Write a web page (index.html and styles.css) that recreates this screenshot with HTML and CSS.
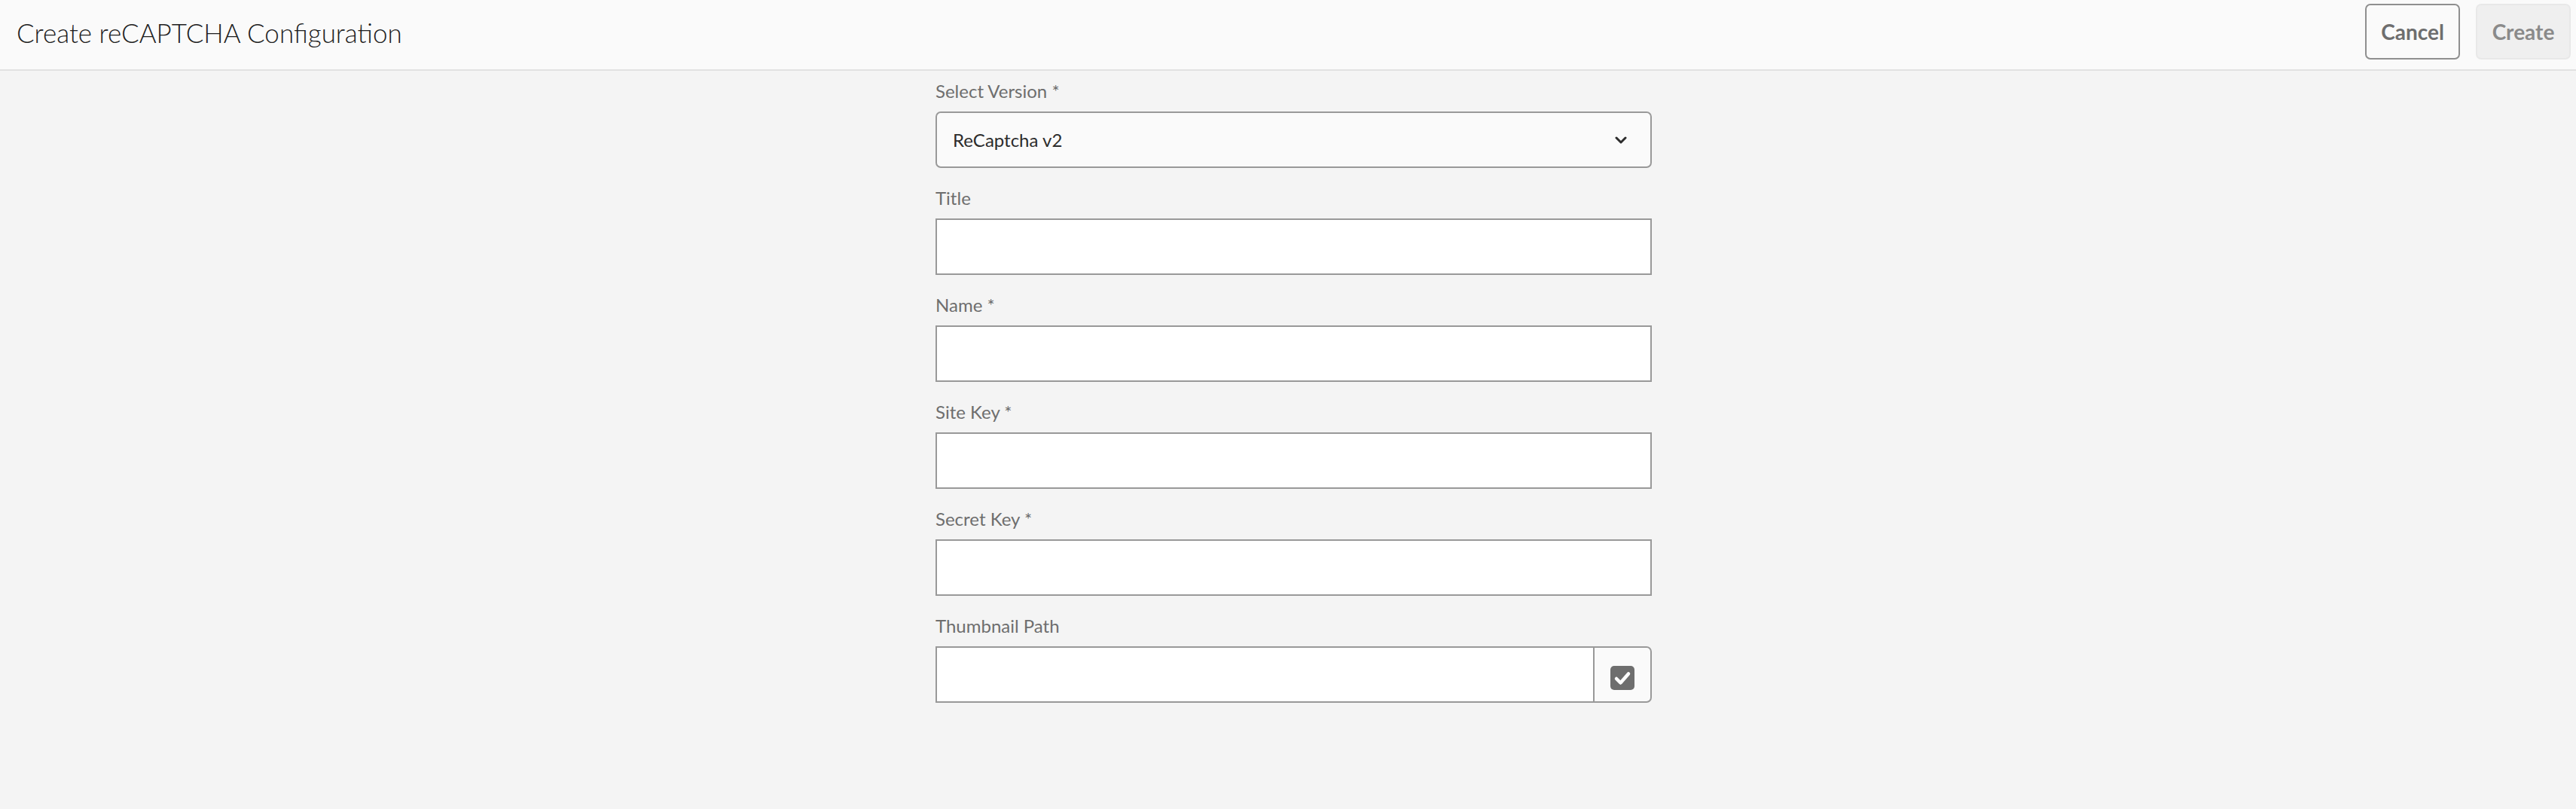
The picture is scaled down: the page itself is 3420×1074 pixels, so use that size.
FILE: index.html
```html
<!DOCTYPE html>
<html lang="en">
<head>
<meta charset="utf-8">
<title>Create reCAPTCHA Configuration</title>
<link rel="stylesheet" href="styles.css">
</head>
<body>
<header class="topbar">
  <h1 class="page-title">Create reCAPTCHA Configuration</h1>
  <div class="actions">
    <button class="btn btn-secondary" type="button">Cancel</button>
    <button class="btn btn-primary" type="button" disabled>Create</button>
  </div>
</header>
<main class="content">
  <form class="form">
    <div class="field">
      <label class="label">Select Version *</label>
      <div class="select">
        <span class="select-value">ReCaptcha v2</span>
        <svg class="chevron" width="16" height="10" viewBox="0 0 16 10"><path d="M2 2 L8 8 L14 2" fill="none" stroke="#2c2c2c" stroke-width="3" stroke-linecap="round" stroke-linejoin="round"/></svg>
      </div>
    </div>
    <div class="field">
      <label class="label">Title</label>
      <input class="input" type="text">
    </div>
    <div class="field">
      <label class="label">Name *</label>
      <input class="input" type="text">
    </div>
    <div class="field">
      <label class="label">Site Key *</label>
      <input class="input" type="text">
    </div>
    <div class="field">
      <label class="label">Secret Key *</label>
      <input class="input" type="text">
    </div>
    <div class="field">
      <label class="label">Thumbnail Path</label>
      <div class="path-group">
        <input class="input path-input" type="text">
        <button class="path-btn" type="button">
          <svg width="32" height="32" viewBox="0 0 32 32"><rect x="0" y="0" width="32" height="32" rx="5" fill="#6e6e6e"/><path d="M8 17 L13.5 22.5 L24 10.5" fill="none" stroke="#fff" stroke-width="4.5" stroke-linecap="round" stroke-linejoin="round"/></svg>
        </button>
      </div>
    </div>
  </form>
</main>
</body>
</html>
```
FILE: styles.css
```css
* { box-sizing: border-box; }
html, body { margin: 0; padding: 0; }
body {
  background: #f4f4f4;
  font-family: Lato, "Open Sans", sans-serif;
  color: #2c2c2c;
  height: 1074px;
}
.topbar {
  height: 94px;
  background: #fafafa;
  border-bottom: 2px solid #e1e1e1;
  display: flex;
  justify-content: space-between;
  align-items: flex-start;
  padding: 5px 7px 0 22px;
}
.page-title {
  margin: 0;
  font-weight: 300;
  font-size: 35px;
  line-height: 76px;
  color: #1e1e1e;
}
.actions { display: flex; gap: 21px; }
.btn {
  height: 74px;
  width: 126px;
  border-radius: 7px;
  font-family: inherit;
  font-weight: 700;
  font-size: 28px;
  padding: 0;
}
.btn-secondary {
  background: #fafafa;
  border: 2px solid #8f8f8f;
  color: #6e6e6e;
}
.btn-primary {
  background: #efefef;
  border: 2px solid #e8e8e8;
  color: #8a8a8a;
}
.content {
  display: flex;
  justify-content: center;
}
.form {
  width: 966px;
  padding: 12px 0 0 15px;
}
.field { margin-bottom: 25px; }
.label {
  display: block;
  font-size: 24px;
  line-height: 30px;
  color: #6e6e6e;
  margin-bottom: 12px;
}
.select {
  height: 75px;
  background: #fafafa;
  border: 2px solid #999;
  border-radius: 7px;
  display: flex;
  align-items: center;
  justify-content: space-between;
  padding: 0 31px 0 21px;
}
.select-value { font-size: 24px; color: #2c2c2c; }
.input {
  display: block;
  width: 100%;
  height: 75px;
  background: #fff;
  border: 2px solid #999;
  border-radius: 0;
  margin: 0;
  font: inherit;
}
.path-group { display: flex; }
.path-input { flex: 1; border-right: none; }
.path-btn {
  width: 78px;
  height: 75px;
  background: #fafafa;
  border: 2px solid #999;
  border-radius: 0 7px 7px 0;
  display: flex;
  align-items: center;
  justify-content: center;
  padding: 8px 0 0 0;
}
.path-btn svg { display: block; }
```
